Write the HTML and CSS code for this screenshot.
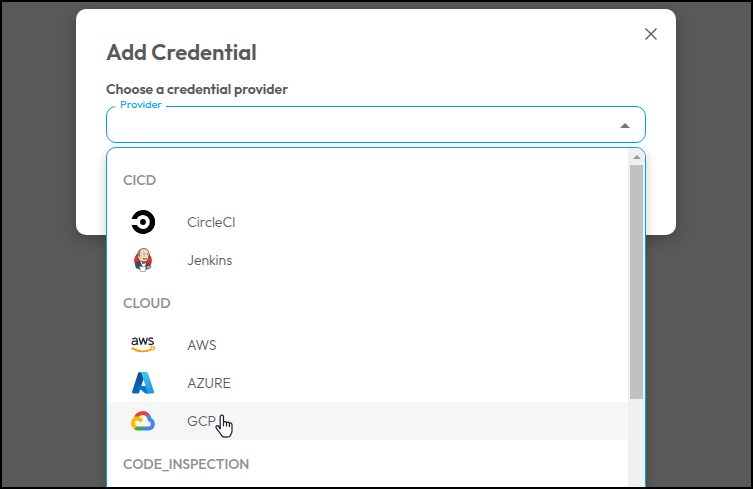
FILE: index.html
```html
<!DOCTYPE html>
<html lang="en">
<head>
    <meta charset="UTF-8">
    <meta name="viewport" content="width=device-width, initial-scale=1.0">
    <title>Add Credential</title>
    <link rel="stylesheet" href="styles.css">
</head>
<body>
    <main class="backdrop">
        <section class="modal" role="dialog" aria-labelledby="modal-title">
            <header class="modal-header">
                <h1 id="modal-title">Add Credential</h1>
                <button class="close" type="button" aria-label="Close">
                    <svg width="12" height="12" viewBox="0 0 12 12" fill="none" stroke="#555" stroke-width="1.3">
                        <path d="M.5 .5l11 11M11.500 .5l-11 11"/>
                    </svg>
                </button>
            </header>
            <h2>Choose a credential provider</h2>

            <div class="select">
                <fieldset class="field">
                    <legend><label for="provider">Provider</label></legend>
                    <input id="provider" type="text" role="combobox" aria-expanded="true" aria-controls="provider-list">
                    <button class="toggle" type="button" aria-label="Close list">
                        <svg width="10" height="5" viewBox="0 0 10 5" fill="#757575"><path d="M0 5l5-5 5 5z"/></svg>
                    </button>
                </fieldset>

                <div class="popup">
                    <div class="list" id="provider-list">
                        <h3>CICD</h3>
                        <button class="option" type="button">
                            <svg width="24" height="24" viewBox="0 0 24 24">
                                <path d="M.6 9A12 12 0 1 1 .6 15H5.700A6.900 6.900 0 1 0 5.700 9z"/>
                                <circle cx="12" cy="12" r="2.900"/>
                            </svg>
                            CircleCI
                        </button>
                        <button class="option" type="button">
                            <svg width="24" height="24" viewBox="0 0 24 24">
                                <circle cx="12" cy="12.500" r="9" fill="#d33833"/>
                                <path d="M5 20c-1-2-1-4 0-6l4-1.500 6 .5 4 3 1 3.500-4 2-5 1z" fill="#335061"/>
                                <path d="M9 13l2 4 1 4 3-5v-2z" fill="#fff"/>
                                <path d="M7 8C6 3 9 .5 13 .6c4 0 5.500 3 5 7-.3 4-2 6.500-5 7C10 14.500 8 12 7.500 10.500 6 10.500 6 8.500 7 8z" fill="#f0d6b7" stroke="#49362f" stroke-width=".7"/>
                                <path d="M7.300 7.800C6.700 4 8 1.800 10 1.100c-.8 2-1.200 4-.8 6.500l-.8 2.500z" fill="#92796d"/>
                                <path d="M12.500 6h1.200M16 6h1M12 10.500q2 1.300 4 0" stroke="#49362f" stroke-width=".9" fill="none"/>
                                <path d="M11.500 13l3 1 3-1v3l-3-1-3 1z" fill="#d33833" stroke="#81302d" stroke-width=".5"/>
                                <path d="M8.500 18.500h6.500l-.5 5h-5z" fill="#fff" stroke="#6d7f8a" stroke-width=".6"/>
                                <path d="M15.500 18.500q3-1.500 4.500.5-1.500 2-4.500 1z" fill="#f0d6b7" stroke="#49362f" stroke-width=".6"/>
                            </svg>
                            Jenkins
                        </button>
                        <h3>CLOUD</h3>
                        <button class="option" type="button">
                            <svg width="24" height="24" viewBox="0 0 24 24" fill="none">
                                <g stroke="#252f3e" stroke-width="1.400">
                                    <path d="M1.400 6q4.800-2 4.800 1.500v2.800l.6 1.500M6.200 8.300Q1.200 7.600 1.200 10c0 2.400 4.200 2 5-.2"/>
                                    <path d="M8.100 4.600l2 7 2.200-6.600 2.200 6.600 1.900-7" stroke-linejoin="bevel"/>
                                    <path d="M22 5.500q-4-1.300-4.100.9c0 2.200 4.400 1.200 4.400 3.500-.1 2-3.300 1.900-4.800 1"/>
                                </g>
                                <path d="M.6 14.800c6.200 4.700 14.400 4.600 20.500 1.200" stroke="#f90" stroke-width="1.700"/>
                                <path d="M19 14.300q4-1 4.300-.2.300 1.300-1.500 3.600" stroke="#f90" stroke-width="1.300"/>
                            </svg>
                            AWS
                        </button>
                        <button class="option" type="button">
                            <svg width="24" height="24" viewBox="0 0 24 24">
                                <defs>
                                    <linearGradient id="azure-left" x1=".6" y1="0" x2=".3" y2="1">
                                        <stop offset="0" stop-color="#114a8b"/>
                                        <stop offset="1" stop-color="#0669bc"/>
                                    </linearGradient>
                                    <linearGradient id="azure-right" x1=".2" y1="0" x2=".7" y2="1">
                                        <stop offset="0" stop-color="#3ccbf4"/>
                                        <stop offset="1" stop-color="#2892df"/>
                                    </linearGradient>
                                </defs>
                                <path d="M8.500 1.200h6.300L8.200 21.400q-.4 1.100-1.500 1.100H2.100q-1.500-.1-1-1.700L7 2.300q.3-1.100 1.500-1.100z" fill="url(#azure-left)"/>
                                <path d="M7.200 15h10l1.300 7.500h-4.200L6.800 16.200q-.5-.8.400-1.200z" fill="#0078d4"/>
                                <path d="M9 1.200h6.500q1.100 0 1.500 1.100l6 18.500q.4 1.500-1.100 1.700h-6.600q1.400-.4 1-1.700L10.400 2.300Q10 1.300 9 1.200z" fill="url(#azure-right)"/>
                            </svg>
                            AZURE
                        </button>
                        <button class="option active" type="button">
                            <svg width="24" height="24" viewBox="0 0 24 24" fill="none" stroke-width="4">
                                <path d="M5 8.300C7.500 3.200 14.500 2.700 17.300 7" stroke="#ea4335"/>
                                <path d="M16.400 6.200q2 1.500 2.400 4.500c4.300 1.300 4.100 8.800-1.300 8.800H12" stroke="#4285f4"/>
                                <path d="M12 19.500H6.800q-1.700 0-2.900-1" stroke="#34a853"/>
                                <path d="M4.600 18.800C.2 15.400 2 9.600 6.500 9.600q2.500 0 4 3" stroke="#fbbc05"/>
                            </svg>
                            <span class="hovered">
                                GCP
                                <svg class="pointer" width="18" height="25" viewBox="0 0 18 25">
                                    <path d="M5.200 15.200V3c0-2.500 3.300-2.500 3.300 0v5.600c.2-1.500 2.900-1.300 3 .3.400-1.300 2.800-1 2.900.6.600-1 2.600-.5 2.600 1.400v6.300c0 2-1.500 3.200-1.800 4.700-1 1.600-7.200 1.600-8.500-.1-.7-2.400-3.400-4.400-5.300-7.600-1.300-2 .8-3.500 2.300-1.800z" fill="#fff" stroke="#1b1b29" stroke-width="1.200"/>
                                    <path d="M8.500 8.500v3.700M11.500 9v3.500M14.400 10v3" stroke="#1b1b29" stroke-width="1.200"/>
                                </svg>
                            </span>
                        </button>
                        <h3>CODE_INSPECTION</h3>
                    </div>
                    <div class="scrollbar" aria-hidden="true">
                        <svg class="scroll-up" width="8" height="4" viewBox="0 0 8 4" fill="#999"><path d="M0 4l4-4 4 4z"/></svg>
                        <div class="thumb"></div>
                    </div>
                </div>
            </div>
        </section>
    </main>
</body>
</html>
```

FILE: styles.css
```css
* {
    box-sizing: border-box;
}

body {
    margin: 0;
    font-family: 'Outfit', 'Lato', sans-serif;
    color: #58595b;
}

h1, h2, h3 {
    margin: 0;
}

button {
    padding: 0;
    border: none;
    background: none;
    color: inherit;
    font-family: inherit;
    cursor: pointer;
}

svg {
    display: block;
    flex: none;
}

.backdrop {
    height: 100vh;
    padding: 7px 17px 7px 16px;
    border: 2px solid #000;
    background-color: #595959;
    overflow: hidden;
}

.modal {
    max-width: 600px;
    margin: 0 auto;
    padding: 18px 30px 92px;
    border-radius: 10px;
    background-color: #fff;
    box-shadow: 0 4px 16px rgba(0, 0, 0, 0.25);
}

.modal-header {
    display: flex;
    justify-content: space-between;
    align-items: flex-start;
    margin-right: -12px;
}

h1 {
    padding-top: 10px;
    font-size: 22px;
    font-weight: 600;
    line-height: 30px;
}

.close {
    padding: 1px 1px;
}

h2 {
    padding-top: 13px;
    font-size: 14px;
    font-weight: 600;
    line-height: 18px;
}

.select {
    position: relative;
}

.field {
    display: flex;
    align-items: center;
    height: 45px;
    margin: 0;
    padding: 0 15px 6px 8px;
    border: 1px solid #00a3e8;
    border-radius: 10px;
}

legend {
    padding: 0 4px 4px 5px;
    color: #00a3e8;
    font-size: 11px;
    line-height: 12px;
}

.field input {
    flex: 1;
    min-width: 0;
    border: none;
    outline: none;
    background: none;
    font-family: inherit;
    font-size: 14px;
}

/* open list, laid over the rest of the dialog */
.popup {
    position: absolute;
    top: 100%;
    left: 0;
    right: 0;
    display: flex;
    height: 400px;
    margin-top: 4px;
    border: 1px solid #00a3e8;
    border-radius: 10px;
    background-color: #fff;
    box-shadow: 0 4px 12px rgba(0, 0, 0, 0.2);
    overflow: hidden;
}

.list {
    flex: 1;
    padding-top: 8px;
}

h3 {
    padding: 2px 0 0 16px;
    color: #8e8e8e;
    font-size: 14px;
    font-weight: 500;
    line-height: 45px;
}

.option {
    display: flex;
    align-items: center;
    gap: 32px;
    width: 100%;
    height: 38px;
    padding-left: 24px;
    font-size: 14px;
    font-weight: 300;
    text-align: left;
}

.option.active {
    background-color: #f6f6f6;
}

.hovered {
    position: relative;
}

.pointer {
    position: absolute;
    top: 2px;
    left: 28px;
}

.scrollbar {
    display: flex;
    flex-direction: column;
    align-items: center;
    gap: 6px;
    width: 17px;
    padding-top: 7px;
    background-color: #f0f0f0;
}

.thumb {
    width: 13px;
    height: 234px;
    background-color: #c1c1c1;
}
```
